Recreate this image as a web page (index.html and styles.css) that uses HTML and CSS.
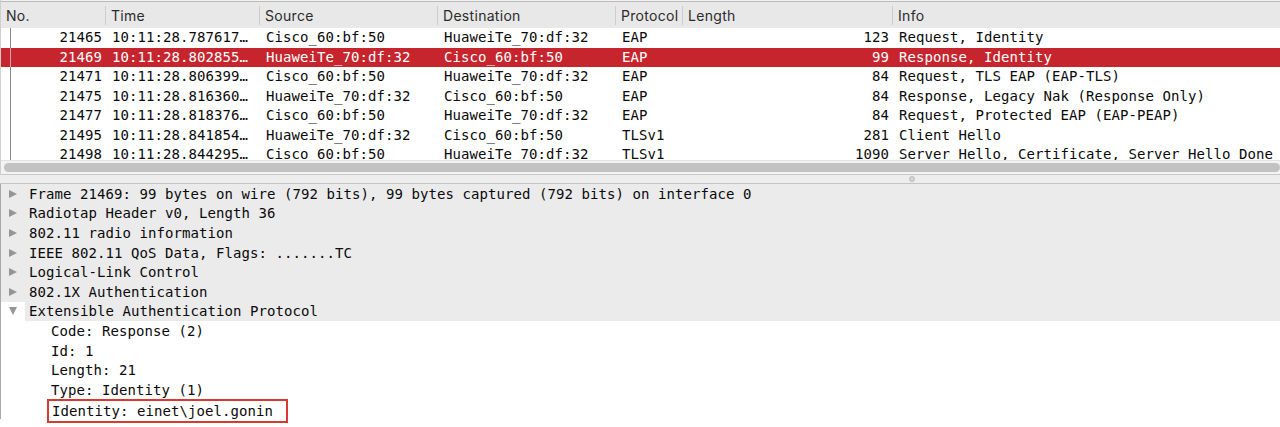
FILE: index.html
```html
<!DOCTYPE html>
<html>
<head>
<meta charset="utf-8">
<link rel="stylesheet" href="styles.css">
</head>
<body>
<div class="app">
  <div class="plist">
    <div class="phead">
      <div class="hc">No.</div>
      <div class="hc">Time</div>
      <div class="hc">Source</div>
      <div class="hc">Destination</div>
      <div class="hc">Protocol</div>
      <div class="hc">Length</div>
      <div class="hc last">Info</div>
    </div>
    <div class="pbody">
      <div class="prow">
        <div class="c no"><span class="rel"></span><span>21465</span></div>
        <div class="c">10:11:28.787617…</div>
        <div class="c">Cisco_60:bf:50</div>
        <div class="c">HuaweiTe_70:df:32</div>
        <div class="c">EAP</div>
        <div class="c len">123</div>
        <div class="c">Request, Identity</div>
      </div>
      <div class="prow sel">
        <div class="c no"><span class="rel"></span><span>21469</span></div>
        <div class="c">10:11:28.802855…</div>
        <div class="c">HuaweiTe_70:df:32</div>
        <div class="c">Cisco_60:bf:50</div>
        <div class="c">EAP</div>
        <div class="c len">99</div>
        <div class="c">Response, Identity</div>
      </div>
      <div class="prow">
        <div class="c no"><span class="rel"></span><span>21471</span></div>
        <div class="c">10:11:28.806399…</div>
        <div class="c">Cisco_60:bf:50</div>
        <div class="c">HuaweiTe_70:df:32</div>
        <div class="c">EAP</div>
        <div class="c len">84</div>
        <div class="c">Request, TLS EAP (EAP-TLS)</div>
      </div>
      <div class="prow">
        <div class="c no"><span class="rel"></span><span>21475</span></div>
        <div class="c">10:11:28.816360…</div>
        <div class="c">HuaweiTe_70:df:32</div>
        <div class="c">Cisco_60:bf:50</div>
        <div class="c">EAP</div>
        <div class="c len">84</div>
        <div class="c">Response, Legacy Nak (Response Only)</div>
      </div>
      <div class="prow">
        <div class="c no"><span class="rel"></span><span>21477</span></div>
        <div class="c">10:11:28.818376…</div>
        <div class="c">Cisco_60:bf:50</div>
        <div class="c">HuaweiTe_70:df:32</div>
        <div class="c">EAP</div>
        <div class="c len">84</div>
        <div class="c">Request, Protected EAP (EAP-PEAP)</div>
      </div>
      <div class="prow">
        <div class="c no"><span class="rel"></span><span>21495</span></div>
        <div class="c">10:11:28.841854…</div>
        <div class="c">HuaweiTe_70:df:32</div>
        <div class="c">Cisco_60:bf:50</div>
        <div class="c">TLSv1</div>
        <div class="c len">281</div>
        <div class="c">Client Hello</div>
      </div>
      <div class="prow">
        <div class="c no"><span class="rel"></span><span>21498</span></div>
        <div class="c">10:11:28.844295…</div>
        <div class="c">Cisco_60:bf:50</div>
        <div class="c">HuaweiTe_70:df:32</div>
        <div class="c">TLSv1</div>
        <div class="c len">1090</div>
        <div class="c">Server Hello, Certificate, Server Hello Done</div>
      </div>
    </div>
    <div class="hscroll"><div class="thumb"></div></div>
  </div>
  <div class="splitter"><span class="grip"></span></div>
  <div class="details">
    <div class="trow top"><span class="tw"><i class="arr"></i></span><span class="tx">Frame 21469: 99 bytes on wire (792 bits), 99 bytes captured (792 bits) on interface 0</span></div>
    <div class="trow top"><span class="tw"><i class="arr"></i></span><span class="tx">Radiotap Header v0, Length 36</span></div>
    <div class="trow top"><span class="tw"><i class="arr"></i></span><span class="tx">802.11 radio information</span></div>
    <div class="trow top"><span class="tw"><i class="arr"></i></span><span class="tx">IEEE 802.11 QoS Data, Flags: .......TC</span></div>
    <div class="trow top"><span class="tw"><i class="arr"></i></span><span class="tx">Logical-Link Control</span></div>
    <div class="trow top"><span class="tw"><i class="arr"></i></span><span class="tx">802.1X Authentication</span></div>
    <div class="trow open"><span class="tw"><i class="arr down"></i></span><span class="tx">Extensible Authentication Protocol</span></div>
    <div class="trow child"><span class="tx">Code: Response (2)</span></div>
    <div class="trow child"><span class="tx">Id: 1</span></div>
    <div class="trow child"><span class="tx">Length: 21</span></div>
    <div class="trow child"><span class="tx">Type: Identity (1)</span></div>
    <div class="trow child"><span class="tx mark">Identity: einet\joel.gonin</span></div>
  </div>
</div>
</body>
</html>
```

FILE: styles.css
```css
* { box-sizing: border-box; }
html, body { margin: 0; padding: 0; background: #ffffff; }
body { width: 1280px; height: 427px; overflow: hidden; }

.app { display: flex; flex-direction: column; width: 1280px; }

.plist { display: flex; flex-direction: column; background: #fff; border-left: 1px solid #cfcfcf; }

.phead {
  display: grid;
  grid-template-columns: 105px 154px 178px 178px 67px 210px 1fr;
  height: 28px;
  background: #e8e8e8;
  border-top: 1px solid #f3f3f3;
  box-shadow: inset 0 1px 0 #b9b9b9;
  padding-top: 1px;
  font-family: Inter, "Open Sans", "Liberation Sans", sans-serif;
  font-size: 14px;
  letter-spacing: 0.3px;
  color: #2b2b2b;
}
.hc {
  display: flex;
  align-items: center;
  padding-left: 5px;
  border-right: 1px solid #cdcdcd;
  margin: 4px 0 3px 0;
}
.hc.last { border-right: none; }

.pbody {
  height: 132px;
  overflow: hidden;
  font-family: "DejaVu Sans Mono", "Liberation Mono", monospace;
  font-size: 14px;
  letter-spacing: 0.07px;
  color: #0a0a0a;
}
.prow {
  display: grid;
  grid-template-columns: 105px 154px 178px 178px 67px 210px 1fr;
  height: 19.5px;
  line-height: 18.5px;
  white-space: nowrap;
}
.prow.sel { background: #c6252d; color: #fff; }
.c { padding-left: 6px; overflow: hidden; }
.c.no { display: flex; justify-content: space-between; padding-left: 9px; padding-right: 4px; }
.rel { width: 1px; background: #8a8a8a; height: 100%; }
.sel .rel { background: #e9a6a9; }
.c.len { text-align: right; padding-right: 4px; }

.hscroll { height: 15px; background: #f3f3f3; border-top: 1px solid #e3e3e3; padding: 2px 0 3px 3px; border-bottom: 1px solid #c8c8c8; }
.thumb { height: 9px; background: #c2c2c2; border-radius: 5px; }

.splitter { height: 9px; background: #ededed; border-bottom: 1px solid #c4c4c4; display: flex; align-items: center; padding-left: 909px; }
.grip { width: 6px; height: 6px; border-radius: 50%; background: #d3d3d3; border: 1px solid #bdbdbd; }

.details {
  font-family: "DejaVu Sans Mono", "Liberation Mono", monospace;
  font-size: 14px;
  letter-spacing: 0.07px;
  color: #0a0a0a;
  border-left: 1px solid #a9a9a9;
}
.trow { display: flex; align-items: center; height: 19.6px; white-space: nowrap; }
.trow.top { background: #ebebeb; }
.trow.open { background: #fff; }
.trow.open .tx { background: #ebebeb; flex: 1; }
.trow .tw { width: 24px; height: 100%; display: flex; align-items: center; padding-left: 8px; }
.trow .tx { height: 100%; display: flex; align-items: center; padding-left: 4px; }
.trow.child { background: #fff; }
.trow.child .tx { padding-left: 50px; }

.arr { display: block; width: 0; height: 0; border-left: 8px solid #959595; border-top: 4.5px solid transparent; border-bottom: 4.5px solid transparent; }
.arr.down { border-left: 4.5px solid transparent; border-right: 4.5px solid transparent; border-top: 8px solid #959595; border-bottom: none; }

.trow.child .tx.mark { margin-left: 46px; border: 2px solid #d83a32; height: 24px; padding: 0 13px 0 3px; margin-top: 4px; }
```
